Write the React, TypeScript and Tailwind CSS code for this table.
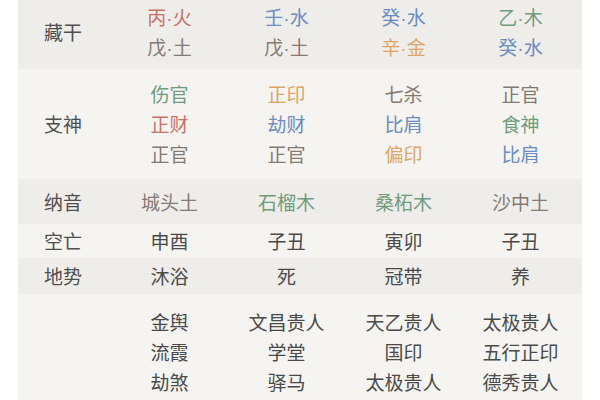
type Cell = { t: string; c: string }

const RED = 'text-[#c8716a]'
const BLUE = 'text-[#6b8cc0]'
const ORANGE = 'text-[#dca565]'
const GREEN = 'text-[#6f9c7e]'
const EARTH = 'text-[#857a72]'
const INK = 'text-[#4a4a4a]'

const rows: {
  label: string
  bg: string
  pad: string
  cells: Cell[][]
}[] = [
  {
    label: '藏干',
    bg: 'bg-[#efedea]',
    pad: 'pt-[2px] pb-[7px]',
    cells: [
      [{ t: '丙·火', c: RED }, { t: '戊·土', c: EARTH }],
      [{ t: '壬·水', c: BLUE }, { t: '戊·土', c: EARTH }],
      [{ t: '癸·水', c: BLUE }, { t: '辛·金', c: ORANGE }],
      [{ t: '乙·木', c: GREEN }, { t: '癸·水', c: BLUE }],
    ],
  },
  {
    label: '支神',
    bg: 'bg-[#f5f4f1]',
    pad: 'py-[10px]',
    cells: [
      [{ t: '伤官', c: GREEN }, { t: '正财', c: RED }, { t: '正官', c: EARTH }],
      [{ t: '正印', c: ORANGE }, { t: '劫财', c: BLUE }, { t: '正官', c: EARTH }],
      [{ t: '七杀', c: EARTH }, { t: '比肩', c: BLUE }, { t: '偏印', c: ORANGE }],
      [{ t: '正官', c: EARTH }, { t: '食神', c: GREEN }, { t: '比肩', c: BLUE }],
    ],
  },
  {
    label: '纳音',
    bg: 'bg-[#efedea]',
    pad: 'pt-[8px] pb-[7px]',
    cells: [
      [{ t: '城头土', c: EARTH }],
      [{ t: '石榴木', c: GREEN }],
      [{ t: '桑柘木', c: GREEN }],
      [{ t: '沙中土', c: EARTH }],
    ],
  },
  {
    label: '空亡',
    bg: 'bg-[#f5f4f1]',
    pad: 'pt-[2px] pb-[2px]',
    cells: [
      [{ t: '申酉', c: INK }],
      [{ t: '子丑', c: INK }],
      [{ t: '寅卯', c: INK }],
      [{ t: '子丑', c: INK }],
    ],
  },
  {
    label: '地势',
    bg: 'bg-[#efedea]',
    pad: 'pt-[3px] pb-[3px]',
    cells: [
      [{ t: '沐浴', c: INK }],
      [{ t: '死', c: INK }],
      [{ t: '冠带', c: INK }],
      [{ t: '养', c: INK }],
    ],
  },
  {
    label: '',
    bg: 'bg-[#f5f4f1]',
    pad: 'pt-[13px] pb-[13px]',
    cells: [
      [{ t: '金舆', c: INK }, { t: '流霞', c: INK }, { t: '劫煞', c: INK }],
      [{ t: '文昌贵人', c: INK }, { t: '学堂', c: INK }, { t: '驿马', c: INK }],
      [{ t: '天乙贵人', c: INK }, { t: '国印', c: INK }, { t: '太极贵人', c: INK }],
      [{ t: '太极贵人', c: INK }, { t: '五行正印', c: INK }, { t: '德秀贵人', c: INK }],
    ],
  },
]

// split "丙·火" so the dot can use a narrow latin font
const CellText = ({ t }: { t: string }) => {
  const parts = t.split('·')
  if (parts.length < 2) return <>{t}</>
  return (
    <>
      {parts[0]}
      <span className="font-['Liberation_Sans'] leading-none">·</span>
      {parts[1]}
    </>
  )
}

export default function App() {
  return (
    <main
      className="h-[400px] w-[600px] overflow-hidden bg-white px-[18px]"
      style={{ fontFamily: '"Noto Sans CJK SC", "Noto Sans", sans-serif' }}
    >
      <div className="flex w-[564px] flex-col">
        {rows.map((row, i) => (
          <div key={i} className={`flex items-center ${row.bg} ${row.pad}`}>
            {/* Row label */}
            <div className="w-[93px] pl-[26px] text-[19px] leading-[30px] text-[#4f4f4f]">
              {row.label}
            </div>
            {row.cells.map((col, j) => (
              <div key={j} className="flex w-[117px] flex-col items-center">
                {col.map((cell, k) => (
                  <span
                    key={k}
                    className={`block h-[30px] overflow-hidden text-[19px] leading-[30px] ${cell.c}`}
                  >
                    <CellText t={cell.t} />
                  </span>
                ))}
              </div>
            ))}
          </div>
        ))}
      </div>
    </main>
  )
}
